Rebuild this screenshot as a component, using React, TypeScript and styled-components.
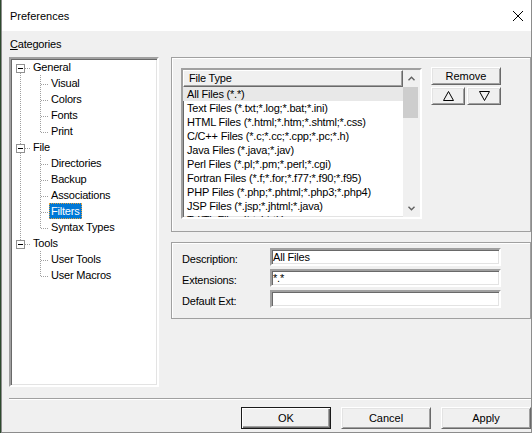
import React from 'react';
import styled, { createGlobalStyle } from 'styled-components';

const categories = [
  { title: 'General', children: ['Visual', 'Colors', 'Fonts', 'Print'] },
  { title: 'File', children: ['Directories', 'Backup', 'Associations', 'Filters', 'Syntax Types'] },
  { title: 'Tools', children: ['User Tools', 'User Macros'] },
];

const fileTypes = [
  'All Files (*.*)',
  'Text Files (*.txt;*.log;*.bat;*.ini)',
  'HTML Files (*.html;*.htm;*.shtml;*.css)',
  'C/C++ Files (*.c;*.cc;*.cpp;*.pc;*.h)',
  'Java Files (*.java;*.jav)',
  'Perl Files (*.pl;*.pm;*.perl;*.cgi)',
  'Fortran Files (*.f;*.for;*.f77;*.f90;*.f95)',
  'PHP Files (*.php;*.phtml;*.php3;*.php4)',
  'JSP Files (*.jsp;*.jhtml;*.java)',
  'Tcl/Tk Files (*.tcl;*.tk)',
];

const fields = [
  { label: 'Description:', value: 'All Files' },
  { label: 'Extensions:', value: '*.*' },
  { label: 'Default Ext:', value: '' },
];

interface TreeRowData {
  label: string,
  level: 0 | 1,
  first: boolean,
  lastRoot: boolean,
  lastChild: boolean,
  selected: boolean,
}

const treeRows: TreeRowData[] = [];
categories.forEach((cat, ci) => {
  const lastRoot = ci === categories.length - 1;
  treeRows.push({ label: cat.title, level: 0, first: ci === 0, lastRoot, lastChild: false, selected: false });
  cat.children.forEach((child, i) => {
    treeRows.push({
      label: child,
      level: 1,
      first: false,
      lastRoot,
      lastChild: i === cat.children.length - 1,
      selected: child === 'Filters',
    });
  });
});

const DOT = '#a0a0a0';

const TreeLines: React.FC<{ row: TreeRowData }> = ({ row }) => {
  const dotted = { stroke: DOT, strokeWidth: 1, strokeDasharray: '1 1' };
  if (row.level === 0) {
    return (
      <svg width={20} height={16} shapeRendering="crispEdges">
        {!row.first && <line x1={9.5} y1={0} x2={9.5} y2={5} {...dotted} />}
        {!row.lastRoot && <line x1={9.5} y1={14} x2={9.5} y2={16} {...dotted} />}
        <line x1={14} y1={9.5} x2={20} y2={9.5} {...dotted} />
        <rect x={5.5} y={5.5} width={8} height={8} fill="#fff" stroke="#919191" />
        <line x1={7} y1={9.5} x2={12} y2={9.5} stroke="#000" strokeWidth={1} />
      </svg>
    );
  }
  return (
    <svg width={38} height={16} shapeRendering="crispEdges">
      {!row.lastRoot && <line x1={9.5} y1={0} x2={9.5} y2={16} {...dotted} />}
      <line x1={29.5} y1={0} x2={29.5} y2={row.lastChild ? 10 : 16} {...dotted} />
      <line x1={30} y1={9.5} x2={38} y2={9.5} {...dotted} />
    </svg>
  );
};

const Chevron: React.FC<{ down?: boolean }> = ({ down }) => (
  <svg width={7} height={5}>
    <polyline
      points={down ? '0.5,0.8 3.5,3.8 6.5,0.8' : '0.5,4.2 3.5,1.2 6.5,4.2'}
      fill="none"
      stroke="#606060"
      strokeWidth={1.4}
    />
  </svg>
);

const Triangle: React.FC<{ down?: boolean }> = ({ down }) => (
  <svg width={11} height={10} shapeRendering="crispEdges">
    <polygon
      points={down ? '0.5,0.5 10.5,0.5 5.5,9.5' : '5.5,0.5 10.5,9.5 0.5,9.5'}
      fill="none"
      stroke="#000"
      strokeWidth={1}
      shapeRendering="auto"
    />
  </svg>
);

export default function App() {
  return (
    <Page>
      <GlobalStyle />
      <Window>
        <TitleBar>
          <Title>Preferences</Title>
          <svg width={10} height={10}>
            <line x1={0} y1={0} x2={10} y2={10} stroke="#000" strokeWidth={1} />
            <line x1={10} y1={0} x2={0} y2={10} stroke="#000" strokeWidth={1} />
          </svg>
        </TitleBar>
        <Body>
          <Main>
            <LeftColumn>
              <Caption><u>C</u>ategories</Caption>
              <Tree>
                {treeRows.map(row => (
                  <TreeRow key={row.label}>
                    <TreeLines row={row} />
                    <TreeLabel $selected={row.selected}>{row.label}</TreeLabel>
                  </TreeRow>
                ))}
              </Tree>
            </LeftColumn>
            <RightColumn>
              <Group $height={175}>
                <ListArea>
                  <ListBox>
                    <ListContent>
                      <HeaderCell>File Type</HeaderCell>
                      {fileTypes.map((item, index) => (
                        <ListRow key={item} $active={index === 0}>{item}</ListRow>
                      ))}
                    </ListContent>
                    <ScrollBar>
                      <ScrollArrow><Chevron /></ScrollArrow>
                      <Thumb />
                      <Track />
                      <ScrollArrow><Chevron down /></ScrollArrow>
                    </ScrollBar>
                  </ListBox>
                  <SideButtons>
                    <Button $width={70} $height={18}>Remove</Button>
                    <ArrowRow>
                      <Button $width={34} $height={18}><Triangle /></Button>
                      <Button $width={34} $height={18}><Triangle down /></Button>
                    </ArrowRow>
                  </SideButtons>
                </ListArea>
              </Group>
              <Group $height={77} $gap={10}>
                <Fields>
                  {fields.map(field => (
                    <FieldRow key={field.label}>
                      <FieldLabel>{field.label}</FieldLabel>
                      <Input>{field.value}</Input>
                    </FieldRow>
                  ))}
                </Fields>
              </Group>
            </RightColumn>
          </Main>
          <Separator />
          <Footer>
            <Button $width={90} $height={22} $default>OK</Button>
            <Button $width={90} $height={22}>Cancel</Button>
            <Button $width={90} $height={22}>Apply</Button>
          </Footer>
        </Body>
      </Window>
    </Page>
  );
}

const GlobalStyle = createGlobalStyle`
  html, body {
    margin: 0;
    padding: 0;
    background: #2d4a2d;
  }
  body {
    font-family: "Liberation Sans", Arial, sans-serif;
    font-size: 11px;
    color: #000;
  }
  * {
    box-sizing: border-box;
  }
`;

const Page = styled.div`
  width: 532px;
  height: 433px;
  padding-left: 1px;
  overflow: hidden;
`;

const Window = styled.div`
  width: 531px;
  height: 433px;
  display: flex;
  flex-direction: column;
  border: 1px solid #8c8c8c;
  border-top: none;
  background: #f0f0f0;
`;

const TitleBar = styled.div`
  height: 31px;
  flex-shrink: 0;
  display: flex;
  align-items: center;
  justify-content: space-between;
  padding: 0 8px 0 8px;
  background: #fff;
`;

const Title = styled.span`
  font-size: 11px;
  color: #000;
`;

const Body = styled.div`
  flex: 1;
  display: flex;
  flex-direction: column;
  letter-spacing: -0.2px;
`;

const Main = styled.div`
  height: 367px;
  display: flex;
  padding-left: 7px;
`;

const LeftColumn = styled.div`
  width: 150px;
  display: flex;
  flex-direction: column;
`;

const Caption = styled.div`
  margin-top: 7px;
  line-height: 13px;
  padding-left: 1px;
`;

const sunken = `
  border: 2px solid;
  border-color: #a0a0a0 #fff #fff #a0a0a0;
  box-shadow: inset 1px 1px 0 #696969, inset -1px -1px 0 #e3e3e3;
`;

const Tree = styled.div`
  margin-top: 6px;
  height: 330px;
  background: #fff;
  ${sunken}
`;

const TreeRow = styled.div`
  height: 16px;
  display: flex;
  align-items: center;
  svg {
    flex-shrink: 0;
  }
`;

const TreeLabel = styled.span<{ $selected: boolean }>`
  height: 16px;
  line-height: 14px;
  padding: 0 1px;
  border: 1px ${props => (props.$selected ? 'dotted #e0a040' : 'solid transparent')};
  background: ${props => (props.$selected ? '#0078d7' : 'transparent')};
  color: ${props => (props.$selected ? '#fff' : '#000')};
  white-space: nowrap;
`;

const RightColumn = styled.div`
  width: 360px;
  margin-left: 12px;
  padding-top: 26px;
  display: flex;
  flex-direction: column;
`;

const Group = styled.div<{ $height: number, $gap?: number }>`
  height: ${props => props.$height}px;
  margin-top: ${props => props.$gap ?? 0}px;
  border: 1px solid #a0a0a0;
  box-shadow: inset 1px 1px 0 #fff;
`;

const ListArea = styled.div`
  display: flex;
  align-items: flex-start;
  padding: 10px 0 0 9px;
`;

const ListBox = styled.div`
  width: 241px;
  height: 151px;
  display: flex;
  background: #fff;
  ${sunken}
`;

const ListContent = styled.div`
  width: 220px;
  overflow: hidden;
`;

const HeaderCell = styled.div`
  height: 17px;
  line-height: 14px;
  padding-left: 5px;
  background: #f0f0f0;
  border: 1px solid;
  border-color: #fff #696969 #696969 #fff;
  box-shadow: inset -1px -1px 0 #a0a0a0;
`;

const ListRow = styled.div<{ $active: boolean }>`
  height: 14px;
  line-height: 14px;
  padding-left: 4px;
  white-space: nowrap;
  background: ${props => (props.$active ? '#e8e8e8' : 'transparent')};
`;

const ScrollBar = styled.div`
  width: 17px;
  display: flex;
  flex-direction: column;
  background: #f0f0f0;
`;

const ScrollArrow = styled.div`
  height: 17px;
  display: flex;
  align-items: center;
  justify-content: center;
`;

const Thumb = styled.div`
  height: 31px;
  margin: 0 2px 0 0;
  background: #cdcdcd;
`;

const Track = styled.div`
  flex: 1;
`;

const SideButtons = styled.div`
  margin-left: 9px;
  margin-top: -1px;
  display: flex;
  flex-direction: column;
  gap: 2px;
`;

const ArrowRow = styled.div`
  display: flex;
  gap: 2px;
`;

const Button = styled.div<{ $width: number, $height: number, $default?: boolean }>`
  width: ${props => props.$width}px;
  height: ${props => props.$height}px;
  display: flex;
  align-items: center;
  justify-content: center;
  background: #f0f0f0;
  letter-spacing: 0;
  ${props =>
    props.$default
      ? `
        border: 1px solid #1a1a1a;
        box-shadow: inset 1px 1px 0 #fff, inset -1px -1px 0 #696969, inset -2px -2px 0 #a0a0a0;
      `
      : `
        border: 1px solid;
        border-color: #fff #696969 #696969 #fff;
        box-shadow: inset 1px 1px 0 #e3e3e3, inset -1px -1px 0 #a0a0a0;
      `}
`;

const Fields = styled.div`
  padding: 5px 0 0 10px;
  display: flex;
  flex-direction: column;
  gap: 3px;
`;

const FieldRow = styled.div`
  display: flex;
  align-items: center;
`;

const FieldLabel = styled.div`
  width: 88px;
  padding-top: 3px;
`;

const Input = styled.div`
  width: 231px;
  height: 18px;
  line-height: 14px;
  padding-left: 1px;
  background: #fff;
  white-space: nowrap;
  ${sunken}
`;

const Separator = styled.div`
  margin-left: 7px;
  height: 2px;
  border-top: 1px solid #a0a0a0;
  border-bottom: 1px solid #fff;
`;

const Footer = styled.div`
  flex: 1;
  display: flex;
  justify-content: flex-end;
  align-items: flex-start;
  gap: 10px;
  padding-top: 7px;
`;
